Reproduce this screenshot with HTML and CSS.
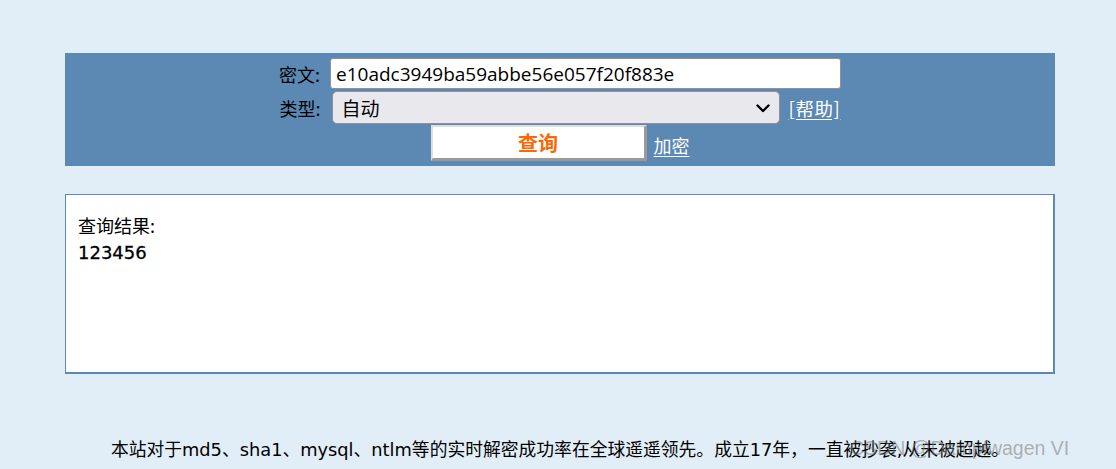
FILE: index.html
```html
<!DOCTYPE html>
<html lang="zh-CN">
<head>
<meta charset="utf-8">
<title>MD5 解密</title>
<link rel="stylesheet" href="styles.css">
</head>
<body>
<div class="page">
  <form class="panel">
    <div class="row">
      <label class="label" for="hash">密文:</label>
      <input class="hash" id="hash" type="text" value="e10adc3949ba59abbe56e057f20f883e">
    </div>
    <div class="row row-type">
      <label class="label" for="type">类型:</label>
      <span class="select-wrap">
        <select class="type" id="type">
          <option>自动</option>
        </select>
        <svg class="chevron" width="14" height="9" viewBox="0 0 14 9" aria-hidden="true"><path d="M1.5 1.5 L7 7 L12.5 1.5" fill="none" stroke="#000" stroke-width="2.4" stroke-linecap="round" stroke-linejoin="round"/></svg>
      </span>
      <a class="link help" href="#">[帮助]</a>
    </div>
    <div class="row row-btn">
      <button class="query" type="button">查询</button>
      <a class="link" href="#">加密</a>
    </div>
  </form>

  <div class="result">
    <div class="result-title">查询结果:</div>
    <div class="result-value">123456</div>
  </div>

  <p class="footer">本站对于md5、sha1、mysql、ntlm等的实时解密成功率在全球遥遥领先。成立17年，一直被抄袭,从未被超越。</p>
</div>
<div class="watermark">CSDN @Dampfwagen VI</div>
</body>
</html>
```

FILE: styles.css
```css
html, body {
  margin: 0;
  padding: 0;
}
body {
  background: #e2eef7;
  font-family: "DejaVu Sans", "Noto Sans CJK SC", sans-serif;
  color: #000;
  height: 469px;
  overflow: hidden;
  position: relative;
}
.page {
  width: 990px;
  margin-left: 65px;
  padding-top: 53px;
}
.panel {
  background: #5c88b4;
  padding: 5px 0 5px;
  margin: 0;
  display: flex;
  flex-direction: column;
  align-items: center;
  gap: 2px;
}
.row {
  display: flex;
  align-items: center;
  justify-content: center;
}
.label {
  font-family: "Noto Sans CJK SC", sans-serif;
  font-size: 18px;
  width: 43px;
  margin-right: 8px;
  color: #000;
  white-space: nowrap;
}
.hash {
  box-sizing: border-box;
  width: 511px;
  height: 31px;
  border: 1px solid #8f8f9d;
  border-radius: 3px;
  background: #fff;
  padding: 0 5px;
  font-family: "Open Sans", sans-serif;
  font-size: 19px;
  color: #000;
  margin: 0;
}
.row-type .label {
  margin-right: 9px;
}
.select-wrap {
  position: relative;
  display: inline-block;
  width: 448px;
  height: 33px;
}
.type {
  appearance: none;
  -webkit-appearance: none;
  box-sizing: border-box;
  width: 100%;
  height: 100%;
  background: #e9e8ed;
  border: 1px solid #8f8f9d;
  border-radius: 5px;
  font-family: "Noto Sans CJK SC", sans-serif;
  font-size: 19px;
  padding: 0 0 0 9px;
  color: #000;
  margin: 0;
}
.chevron {
  position: absolute;
  right: 10px;
  top: 13px;
  pointer-events: none;
}
.link {
  font-family: "Noto Sans CJK SC", sans-serif;
  font-size: 18px;
  color: #fff;
  text-decoration: underline;
  text-underline-offset: 3px;
  margin-left: 9px;
  white-space: nowrap;
}
.help {
  font-size: 18.5px;
  letter-spacing: 0.6px;
}
.row-btn {
  margin-top: -1px;
}
.row-btn .link {
  margin-left: 7px;
  margin-top: 4px;
}
.query {
  box-sizing: border-box;
  width: 216px;
  height: 36px;
  background: #fff;
  border-style: solid;
  border-width: 2px 3px 3px 2px;
  border-color: #dedede #9a9a9a #9a9a9a #dedede;
  font-family: "Noto Sans CJK SC", sans-serif;
  font-size: 20px;
  font-weight: bold;
  color: #ff6600;
  padding: 0;
  margin: 0;
  line-height: 30px;
}
.result {
  box-sizing: border-box;
  margin-top: 28px;
  height: 180px;
  background: #fff;
  border-style: solid;
  border-color: #5c88b4;
  border-width: 1px 2px 2px 1px;
  padding: 16px 12px;
  line-height: 28px;
}
.result-title {
  font-family: "Noto Sans CJK SC", sans-serif;
  font-size: 18px;
}
.result-value {
  font-family: "DejaVu Sans", sans-serif;
  font-size: 18px;
  -webkit-text-stroke: 0.3px #000;
}
.footer {
  margin: 64px 0 0 0;
  text-align: center;
  font-size: 17.8px;
  line-height: 24px;
  white-space: nowrap;
}
.watermark {
  position: absolute;
  left: 850px;
  top: 437px;
  font-family: "Liberation Sans", sans-serif;
  font-size: 19.5px;
  color: rgba(120, 120, 120, 0.55);
  white-space: nowrap;
  pointer-events: none;
}
```
